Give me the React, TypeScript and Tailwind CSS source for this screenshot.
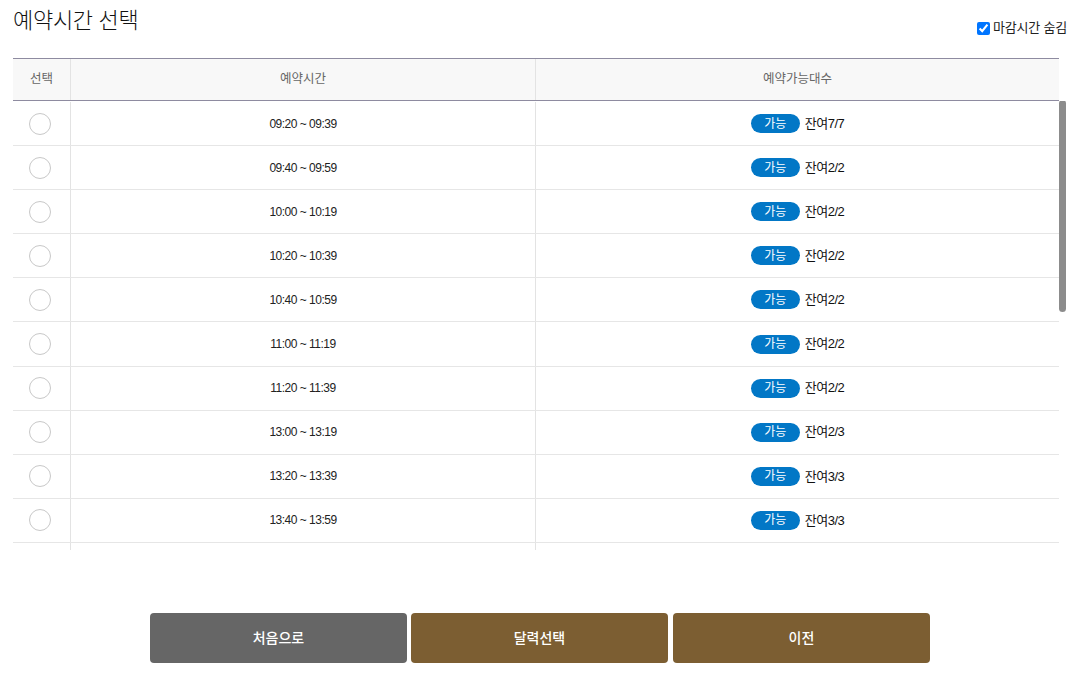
import React from "react";

const rows: { time: string; remain: string }[] = [
  { time: "09:20 ~ 09:39", remain: "7/7" },
  { time: "09:40 ~ 09:59", remain: "2/2" },
  { time: "10:00 ~ 10:19", remain: "2/2" },
  { time: "10:20 ~ 10:39", remain: "2/2" },
  { time: "10:40 ~ 10:59", remain: "2/2" },
  { time: "11:00 ~ 11:19", remain: "2/2" },
  { time: "11:20 ~ 11:39", remain: "2/2" },
  { time: "13:00 ~ 13:19", remain: "2/3" },
  { time: "13:20 ~ 13:39", remain: "3/3" },
  { time: "13:40 ~ 13:59", remain: "3/3" },
];

const font = { fontFamily: '"Liberation Sans", "Noto Sans CJK KR", sans-serif' };

export default function App() {
  return (
    <div className="w-[1089px] h-[680px] bg-white overflow-hidden" style={font}>
      <div className="pl-[13px] pr-[22px]">
        <div className="flex justify-between items-start h-[58px]">
          <h1 className="text-[22px] leading-[26px] pt-[8px] text-[#111] font-light tracking-[-0.3px]">
            예약시간 선택
          </h1>
          <label className="flex items-center gap-[3px] mt-[20px] text-[13px] text-[#222] leading-[16px] tracking-[-0.2px]">
            <input type="checkbox" defaultChecked className="w-[13px] h-[13px] m-0 accent-[#0075ff]" />
            <span>마감시간 숨김</span>
          </label>
        </div>

        <div className="mr-[8px] flex h-[43px] bg-[#f8f8f8] border-t border-b border-[#8e8ba0] text-[12.5px] text-[#666]">
          <div className="w-[58px] flex items-center justify-center border-r border-[#e3e3e3]">선택</div>
          <div className="w-[465px] flex items-center justify-center border-r border-[#e3e3e3]">예약시간</div>
          <div className="flex-1 flex items-center justify-center">예약가능대수</div>
        </div>

        <div className="relative h-[449px] overflow-hidden pt-[1px]">
          <div className="mr-[8px]">
            {rows.map((r) => (
              <div key={r.time} className="flex h-[44.1px] border-b border-[#e6e6e6]">
                <div className="w-[58px] flex items-center justify-center pr-[4px] border-r border-[#e3e3e3]">
                  <span className="block w-[22px] h-[22px] rounded-full border border-[#c8c8c8] bg-white" />
                </div>
                <div className="w-[465px] flex items-center justify-center border-r border-[#e3e3e3] text-[12px] text-[#222] tracking-[-0.5px]">
                  {r.time}
                </div>
                <div className="flex-1 flex items-center justify-center gap-[5px]">
                  <span className="inline-flex items-center justify-center w-[49px] h-[19px] rounded-full bg-[#0277c6] text-white text-[12px] leading-none">
                    가능
                  </span>
                  <span className="text-[13px] text-[#111] tracking-[-0.5px]">잔여{r.remain}</span>
                </div>
              </div>
            ))}
            <div className="flex h-[44px]">
              <div className="w-[58px] border-r border-[#e3e3e3]" />
              <div className="w-[465px] border-r border-[#e3e3e3]" />
              <div className="flex-1" />
            </div>
          </div>
          <div className="absolute left-[1046px] top-[-1px] w-[7px] h-[212px] rounded-full bg-[#8c8c8c]" />
        </div>

        <div className="flex justify-center mt-[63px]">
          <button className="w-[257px] h-[50px] mr-[4px] rounded-[4px] bg-[#666666] text-white text-[14px] font-medium">
            처음으로
          </button>
          <button className="w-[257px] h-[50px] mr-[5px] rounded-[4px] bg-[#7c5e32] text-white text-[14px] font-medium">
            달력선택
          </button>
          <button className="w-[257px] h-[50px] rounded-[4px] bg-[#7c5e32] text-white text-[14px] font-medium">
            이전
          </button>
        </div>
      </div>
    </div>
  );
}
